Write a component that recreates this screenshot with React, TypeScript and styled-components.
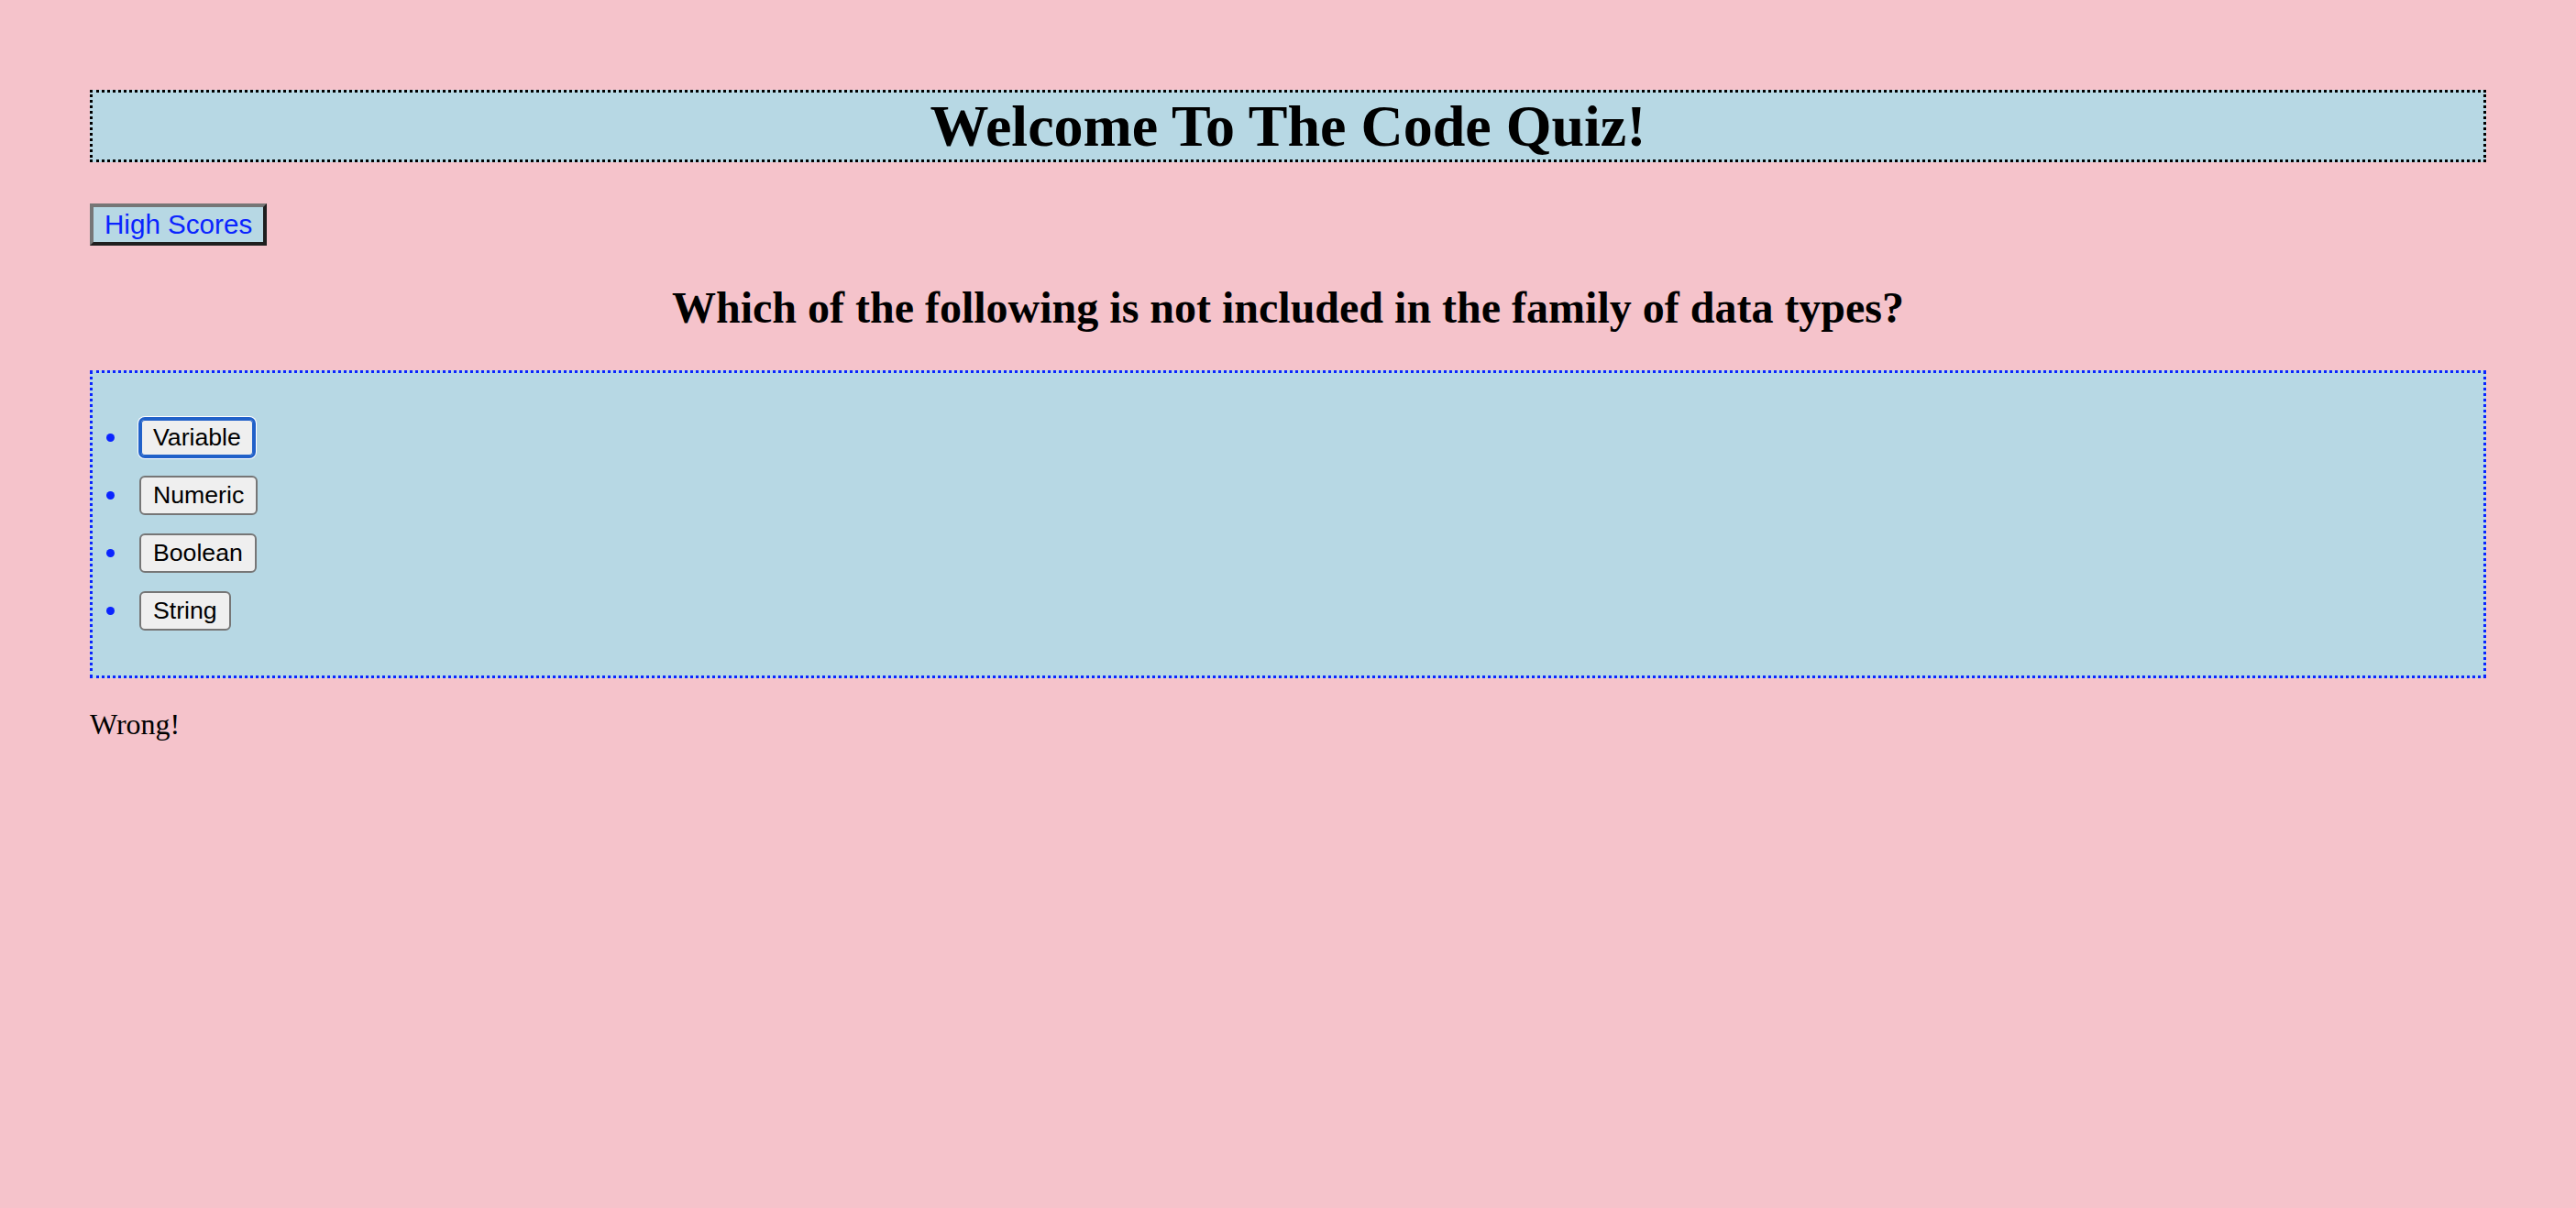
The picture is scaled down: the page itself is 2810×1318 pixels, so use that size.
import React from "react";
import styled, { createGlobalStyle } from "styled-components";

const GlobalStyle = createGlobalStyle`
  html, body {
    margin: 0;
    padding: 0;
    background: #f5c3cb;
  }
  body {
    font-family: "Liberation Serif", "Times New Roman", serif;
    color: #000;
  }
`;

const Page = styled.main`
  padding: 98px 98px 40px;
  min-height: 1318px;
  box-sizing: border-box;
`;

const Header = styled.header`
  background: #b7d8e4;
  border: 3px dotted #000;
`;

const Title = styled.h1`
  margin: 0;
  font-family: "Liberation Serif", "Times New Roman", serif;
  font-size: 64px;
  line-height: 73px;
  font-weight: 700;
  text-align: center;
`;

const ScoresBar = styled.nav`
  margin-top: 45px;
  display: flex;
`;

const ScoresButton = styled.button`
  font-family: "Liberation Sans", Arial, sans-serif;
  font-size: 29.6px;
  line-height: 34px;
  color: #0a24ff;
  background: #b7d8e4;
  padding: 2px 12px;
  margin: 0;
  border-width: 4px;
  border-style: solid;
  border-color: #767676 #1f1f1f #1f1f1f #767676;
  cursor: pointer;
`;

const Question = styled.h2`
  margin: 40px 0 41px;
  font-family: "Liberation Serif", "Times New Roman", serif;
  font-size: 48px;
  line-height: 55px;
  font-weight: 700;
  text-align: center;
`;

const AnswerBox = styled.section`
  background: #b7d8e4;
  border: 3px dotted #0a24ff;
`;

const AnswerList = styled.ul`
  list-style: none;
  margin: 0;
  padding: 49px 0 49px 15px;
  display: flex;
  flex-direction: column;
  gap: 20px;
`;

const AnswerItem = styled.li`
  display: flex;
  align-items: center;
  gap: 27px;

  &::before {
    content: "";
    width: 9px;
    height: 9px;
    border-radius: 50%;
    background: #0a24ff;
    flex: none;
  }
`;

const AnswerButton = styled.button<{ $focused?: boolean }>`
  font-family: "Liberation Sans", Arial, sans-serif;
  font-size: 26.67px;
  line-height: 31px;
  color: #000;
  background: #efefef;
  padding: 4px 13px;
  margin: 0;
  border: 2px solid ${(p) => (p.$focused ? "#2161c9" : "#767676")};
  border-radius: 6px;
  box-shadow: ${(p) =>
    p.$focused
      ? "0 0 0 1px #2161c9, 0 0 0 2px #ffffff, inset 0 0 0 1px #2161c9"
      : "none"};
  cursor: pointer;
`;

const Feedback = styled.p`
  margin: 32px 0 0;
  font-family: "Liberation Serif", "Times New Roman", serif;
  font-size: 32px;
`;

const answers = ["Variable", "Numeric", "Boolean", "String"];

export default function App() {
  return (
    <>
      <GlobalStyle />
      <Page>
        <Header>
          <Title>Welcome To The Code Quiz!</Title>
        </Header>
        <ScoresBar>
          <ScoresButton>High Scores</ScoresButton>
        </ScoresBar>
        <Question>
          Which of the following is not included in the family of data types?
        </Question>
        <AnswerBox>
          <AnswerList>
            {answers.map((a, i) => (
              <AnswerItem key={a}>
                <AnswerButton $focused={i === 0}>{a}</AnswerButton>
              </AnswerItem>
            ))}
          </AnswerList>
        </AnswerBox>
        <Feedback>Wrong!</Feedback>
      </Page>
    </>
  );
}
